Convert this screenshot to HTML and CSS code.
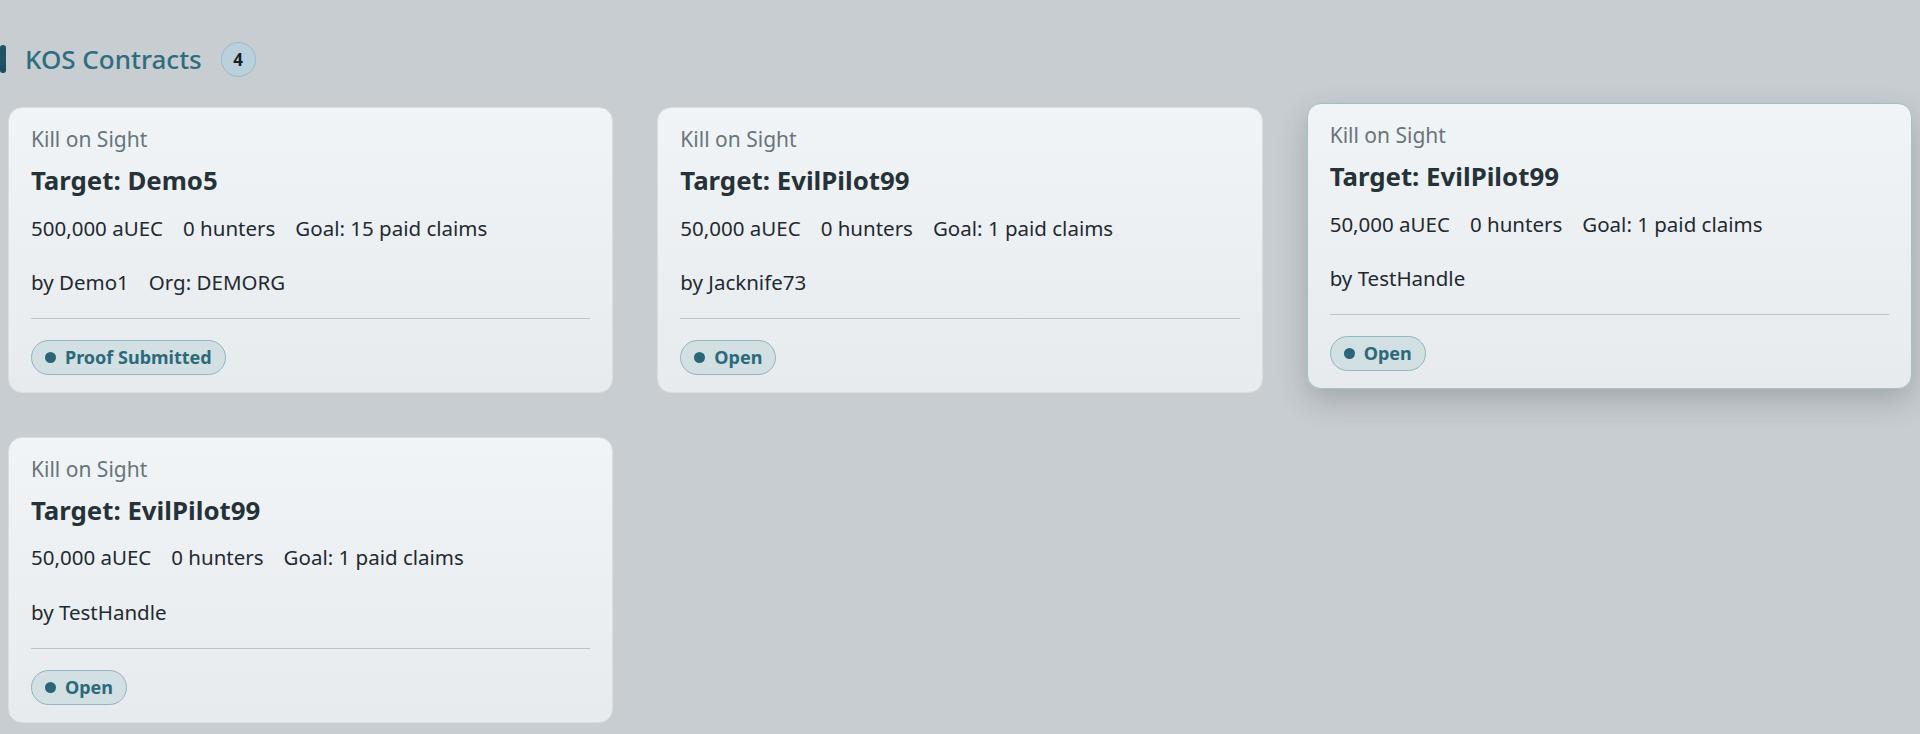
FILE: index.html
```html
<!DOCTYPE html>
<html lang="en">
<head>
<meta charset="utf-8">
<title>KOS Contracts</title>
<link rel="stylesheet" href="styles.css">
</head>
<body>
<section class="board">
  <header class="board-head">
    <span class="head-bar"></span>
    <h2 class="head-title">KOS Contracts</h2>
    <span class="head-count">4</span>
  </header>
  <div class="grid">
    <article class="card">
      <div class="kind">Kill on Sight</div>
      <h3 class="target">Target: Demo5</h3>
      <div class="stats"><span>500,000 aUEC</span><span>0 hunters</span><span>Goal: 15 paid claims</span></div>
      <div class="meta"><span>by Demo1</span><span>Org: DEMORG</span></div>
      <hr class="divider">
      <span class="status"><span class="dot"></span>Proof Submitted</span>
    </article>
    <article class="card">
      <div class="kind">Kill on Sight</div>
      <h3 class="target">Target: EvilPilot99</h3>
      <div class="stats"><span>50,000 aUEC</span><span>0 hunters</span><span>Goal: 1 paid claims</span></div>
      <div class="meta"><span>by Jacknife73</span></div>
      <hr class="divider">
      <span class="status"><span class="dot"></span>Open</span>
    </article>
    <article class="card is-hovered">
      <div class="kind">Kill on Sight</div>
      <h3 class="target">Target: EvilPilot99</h3>
      <div class="stats"><span>50,000 aUEC</span><span>0 hunters</span><span>Goal: 1 paid claims</span></div>
      <div class="meta"><span>by TestHandle</span></div>
      <hr class="divider">
      <span class="status"><span class="dot"></span>Open</span>
    </article>
    <article class="card">
      <div class="kind">Kill on Sight</div>
      <h3 class="target">Target: EvilPilot99</h3>
      <div class="stats"><span>50,000 aUEC</span><span>0 hunters</span><span>Goal: 1 paid claims</span></div>
      <div class="meta"><span>by TestHandle</span></div>
      <hr class="divider">
      <span class="status"><span class="dot"></span>Open</span>
    </article>
  </div>
</section>
</body>
</html>
```

FILE: styles.css
```css
html, body {
  background: #c8cdd1;
}
body {
  margin: 0;
  font-family: "Noto Sans", "Open Sans", sans-serif;
  color: #1f2a30;
}
.board {
  padding: 41px 8px 8px;
}
.board-head {
  display: flex;
  align-items: center;
  gap: 19px;
  height: 36px;
  margin: 0 0 30px -8px;
}
.head-bar {
  flex: none;
  display: block;
  width: 6px;
  height: 28px;
  border-radius: 3px;
  background: #275f71;
  box-shadow: inset 0 -8px 10px rgba(10, 40, 50, 0.35);
}
.head-title {
  margin: 0;
  font-size: 26px;
  line-height: 36px;
  font-weight: 500;
  color: #2d6d7f;
}
.head-count {
  flex: none;
  box-sizing: border-box;
  width: 35px;
  height: 35px;
  border-radius: 50%;
  border: 1.5px solid #95bcc8;
  background: #bad1dd;
  display: flex;
  align-items: center;
  justify-content: center;
  font-size: 17px;
  font-weight: 700;
  color: #1b1f22;
}
.grid {
  display: grid;
  grid-template-columns: repeat(3, 1fr);
  gap: 44px;
}
.card {
  box-sizing: border-box;
  padding: 17px 22px 17px;
  border: 1px solid #d9dee1;
  border-radius: 14px;
  background: linear-gradient(180deg, #f0f4f7 0%, #e8ebee 100%);
  display: flex;
  flex-direction: column;
  align-items: flex-start;
}
.card.is-hovered {
  transform: translateY(-4px);
  border-color: #9ec2ca;
  box-shadow: 0 12px 30px rgba(40, 50, 60, 0.24);
}
.kind {
  font-size: 21px;
  line-height: 28px;
  color: #69757b;
}
.target {
  margin: 11px 0 0;
  font-size: 25.8px;
  line-height: 32px;
  font-weight: 700;
  color: #263238;
}
.stats, .meta {
  display: flex;
  gap: 20px;
  font-size: 20.5px;
  line-height: 28px;
  color: #1f2a30;
}
.stats {
  margin-top: 17.5px;
}
.meta {
  margin-top: 26.3px;
}
.divider {
  align-self: stretch;
  margin: 22px 0 0;
  border: 0;
  border-top: 1px solid #bfc6ca;
  height: 0;
}
.status {
  margin-top: 21px;
  display: inline-flex;
  align-items: center;
  gap: 9px;
  padding: 4.5px 13px;
  border: 1.5px solid #90b6bf;
  border-radius: 999px;
  background: #d2dfe3;
  font-size: 18px;
  line-height: 24px;
  font-weight: 700;
  color: #2c6a7b;
}
.dot {
  width: 11px;
  height: 11px;
  border-radius: 50%;
  background: #2a6677;
}
```
